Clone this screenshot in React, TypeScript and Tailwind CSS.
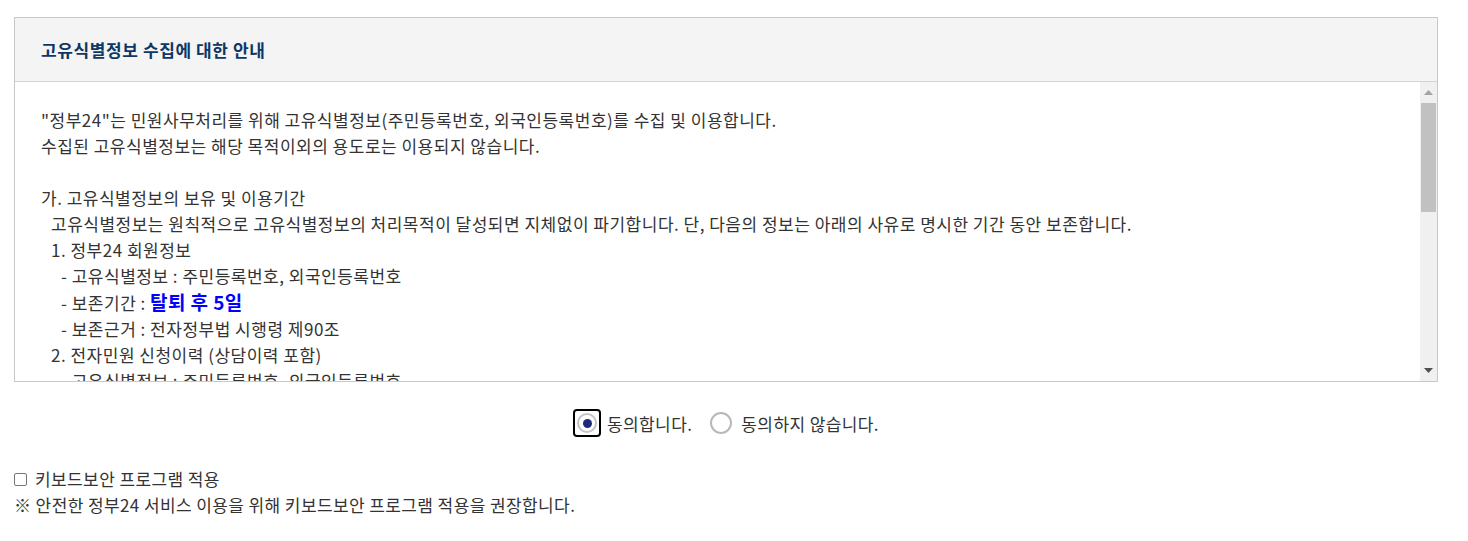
import React from "react";

const font = { fontFamily: '"Noto Sans CJK KR", "Noto Sans", sans-serif' };

export default function App() {
  return (
    <div className="w-[1468px] h-[541px] bg-white text-[#333]" style={font}>
      <div className="pt-[17px] pl-[14px] pr-[30px]">
        <div className="border border-[#c8c8c8]">
          <div className="h-[64px] bg-[#f4f4f4] border-b border-[#d4d4d4] flex items-center pl-[26px]">
            <h2 className="text-[17px] font-bold text-[#0c3766] leading-none tracking-[0.6px]">
              고유식별정보 수집에 대한 안내
            </h2>
          </div>
          <div className="flex h-[299px]">
            <div className="flex-1 overflow-hidden pt-[25px] pl-[26px] text-[17px] leading-[26px] tracking-[0.5px] text-[#333]">
              <p>"정부24"는 민원사무처리를 위해 고유식별정보(주민등록번호, 외국인등록번호)를 수집 및 이용합니다.</p>
              <p>수집된 고유식별정보는 해당 목적이외의 용도로는 이용되지 않습니다.</p>
              <p className="h-[26px]"></p>
              <p>가. 고유식별정보의 보유 및 이용기간</p>
              <p className="pl-[10px]">고유식별정보는 원칙적으로 고유식별정보의 처리목적이 달성되면 지체없이 파기합니다. 단, 다음의 정보는 아래의 사유로 명시한 기간 동안 보존합니다.</p>
              <p className="pl-[10px]">1. 정부24 회원정보</p>
              <p className="pl-[20px]">- 고유식별정보 : 주민등록번호, 외국인등록번호</p>
              <p className="pl-[20px]">
                - 보존기간 : <span className="text-[19px] font-bold text-[#0000ff] tracking-[0.4px]">탈퇴 후 5일</span>
              </p>
              <p className="pl-[20px]">- 보존근거 : 전자정부법 시행령 제90조</p>
              <p className="pl-[10px]">2. 전자민원 신청이력 (상담이력 포함)</p>
              <p className="pl-[20px]">- 고유식별정보 : 주민등록번호, 외국인등록번호</p>
              <p className="pl-[20px]">- 보존기간 : 민원사무처리 완료 후 5년</p>
            </div>
            <div className="w-[17px] bg-[#f0f0f0] flex flex-col items-center">
              <div className="h-[21px] flex items-center justify-center">
                <svg width="9" height="5" viewBox="0 0 9 5"><path d="M4.5 0L9 5H0z" fill="#a3a3a3" /></svg>
              </div>
              <div className="w-[15px] h-[109px] bg-[#c1c1c1]"></div>
              <div className="flex-1"></div>
              <div className="h-[21px] flex items-center justify-center">
                <svg width="9" height="5" viewBox="0 0 9 5"><path d="M0 0H9L4.5 5z" fill="#505050" /></svg>
              </div>
            </div>
          </div>
        </div>

        <div className="mt-[27px] flex items-center justify-center h-[28px]">
          <label className="flex items-center">
            <span className="w-[28px] h-[28px] rounded-[4px] border-2 border-black flex items-center justify-center">
              <span className="w-[20px] h-[20px] rounded-full border-2 border-[#c4c4c4] flex items-center justify-center bg-white">
                <span className="w-[9px] h-[9px] rounded-full bg-[#1e2a7a]"></span>
              </span>
            </span>
            <span className="ml-[6px] text-[17px] leading-none tracking-[0.4px]">동의합니다.</span>
          </label>
          <label className="flex items-center ml-[18px]">
            <span className="w-[22px] h-[22px] rounded-full border-2 border-[#b8b8b8] bg-white"></span>
            <span className="ml-[9px] text-[17px] leading-none tracking-[0.4px]">동의하지 않습니다.</span>
          </label>
        </div>
      </div>

      <div className="mt-[29px] pl-[14px] text-[17px] leading-[26px] tracking-[0.4px]">
        <label className="flex items-center">
          <span className="w-[13px] h-[13px] border border-[#767676] rounded-[2px] bg-white"></span>
          <span className="ml-[8px]">키보드보안 프로그램 적용</span>
        </label>
        <p>※ 안전한 정부24 서비스 이용을 위해 키보드보안 프로그램 적용을 권장합니다.</p>
      </div>
    </div>
  );
}
